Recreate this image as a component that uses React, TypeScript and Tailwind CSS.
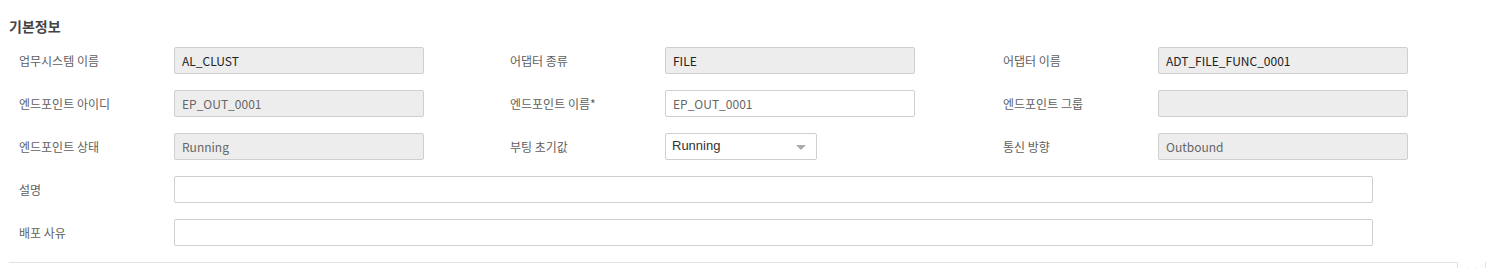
import { ChevronDown } from "lucide-react"

const font = { fontFamily: '"Noto Sans CJK KR", "Noto Sans", sans-serif' }

function Field({ value, disabled = true, dark = false }: { value?: string; disabled?: boolean; dark?: boolean }) {
	return (
		<div
			className={`flex h-[27px] w-[250px] items-center rounded-[2px] border border-[#cfcfcf] px-[7px] text-[12px] ${
				disabled ? "bg-[#ededed]" : "bg-white"
			} ${dark ? "text-[#222]" : "text-[#666]"}`}
		>
			{value}
		</div>
	)
}

function Row({ label, children }: { label: string; children: React.ReactNode }) {
	return (
		<div className="flex items-center">
			<div className="w-[155px] text-[12px] text-[#5f5f5f]">{label}</div>
			{children}
		</div>
	)
}

export default function App() {
	return (
		<div className="h-[268px] w-[1487px] overflow-hidden bg-white" style={font}>
			<div className="px-[9px] pt-[16px]">
				<h2 className="text-[14px] font-bold leading-[20px] text-[#444]">기본정보</h2>
			</div>
			<div className="mt-[11px] flex flex-col gap-[16px] px-[19px]">
				<div className="grid grid-cols-[491px_493px_1fr]">
					<Row label="업무시스템 이름"><Field value="AL_CLUST" dark /></Row>
					<Row label="어댑터 종류"><Field value="FILE" dark /></Row>
					<Row label="어댑터 이름"><Field value="ADT_FILE_FUNC_0001" dark /></Row>
				</div>
				<div className="grid grid-cols-[491px_493px_1fr]">
					<Row label="엔드포인트 아이디"><Field value="EP_OUT_0001" /></Row>
					<Row label="엔드포인트 이름*"><Field value="EP_OUT_0001" disabled={false} /></Row>
					<Row label="엔드포인트 그룹"><Field /></Row>
				</div>
				<div className="grid grid-cols-[491px_493px_1fr]">
					<Row label="엔드포인트 상태"><Field value="Running" /></Row>
					<Row label="부팅 초기값">
						<div
							className="flex h-[27px] w-[152px] items-center justify-between rounded-[2px] border border-[#cfcfcf] bg-white pl-[6px] pr-[10px] text-[13px] text-[#333]"
							style={{ fontFamily: '"Liberation Sans", Arial, sans-serif' }}
						>
							<span className="-mt-[2px]">Running</span>
							<span className="mt-[1px] h-0 w-0 border-x-[5px] border-t-[5px] border-x-transparent border-t-[#aaa]" />
						</div>
					</Row>
					<Row label="통신 방향"><Field value="Outbound" /></Row>
				</div>
				<Row label="설명">
					<div className="h-[27px] w-[1199px] rounded-[2px] border border-[#cfcfcf] bg-white" />
				</Row>
				<Row label="배포 사유">
					<div className="h-[27px] w-[1199px] rounded-[2px] border border-[#cfcfcf] bg-white" />
				</Row>
			</div>
			<div className="mt-[16px] flex items-start pl-[9px]">
				<div className="h-[20px] w-[1449px] border-r border-t border-[#e2e2e2]" />
				<ChevronDown size={16} strokeWidth={1.5} className="ml-[6px] mt-[0px] shrink-0 text-[#aaa]" />
				<div className="ml-[5px] h-[20px] border-l border-[#e2e2e2]" />
			</div>
		</div>
	)
}
